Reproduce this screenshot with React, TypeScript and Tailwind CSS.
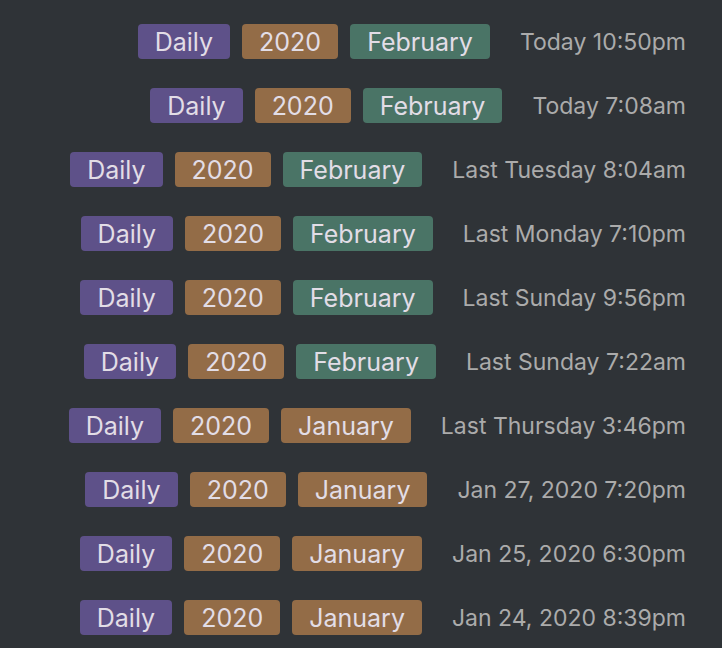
import React from 'react';

type Entry = { month: 'February' | 'January'; when: string };

const entries: Entry[] = [
  { month: 'February', when: 'Today 10:50pm' },
  { month: 'February', when: 'Today 7:08am' },
  { month: 'February', when: 'Last Tuesday 8:04am' },
  { month: 'February', when: 'Last Monday 7:10pm' },
  { month: 'February', when: 'Last Sunday 9:56pm' },
  { month: 'February', when: 'Last Sunday 7:22am' },
  { month: 'January', when: 'Last Thursday 3:46pm' },
  { month: 'January', when: 'Jan 27, 2020 7:20pm' },
  { month: 'January', when: 'Jan 25, 2020 6:30pm' },
  { month: 'January', when: 'Jan 24, 2020 8:39pm' },
];

const Tag: React.FC<{ color: string; children: React.ReactNode }> = ({ color, children }) => (
  <span
    className={`h-[35px] flex items-center px-[17px] pt-[1px] rounded-[4px] text-[25px] leading-none text-[#e2dde6] ${color}`}
  >
    {children}
  </span>
);

const App: React.FC = () => {
  return (
    <div
      className="w-[722px] h-[648px] bg-[#2f3337] overflow-hidden flex flex-col items-end gap-[29px] pt-[24px] pr-[36px]"
      style={{ fontFamily: 'Inter, "Noto Sans", sans-serif' }}
    >
      {entries.map((e, i) => (
        <div key={i} className="flex items-center h-[35px]">
          <div className="flex items-center gap-[12px]">
            <Tag color="bg-[#5e5189]">Daily</Tag>
            <Tag color="bg-[#936c47]">2020</Tag>
            <Tag color={e.month === 'February' ? 'bg-[#4a7466]' : 'bg-[#936c47]'}>{e.month}</Tag>
          </div>
          <span className="ml-[30px] pt-[1px] text-[23px] text-[#ababab]">{e.when}</span>
        </div>
      ))}
    </div>
  );
};

export default App;
